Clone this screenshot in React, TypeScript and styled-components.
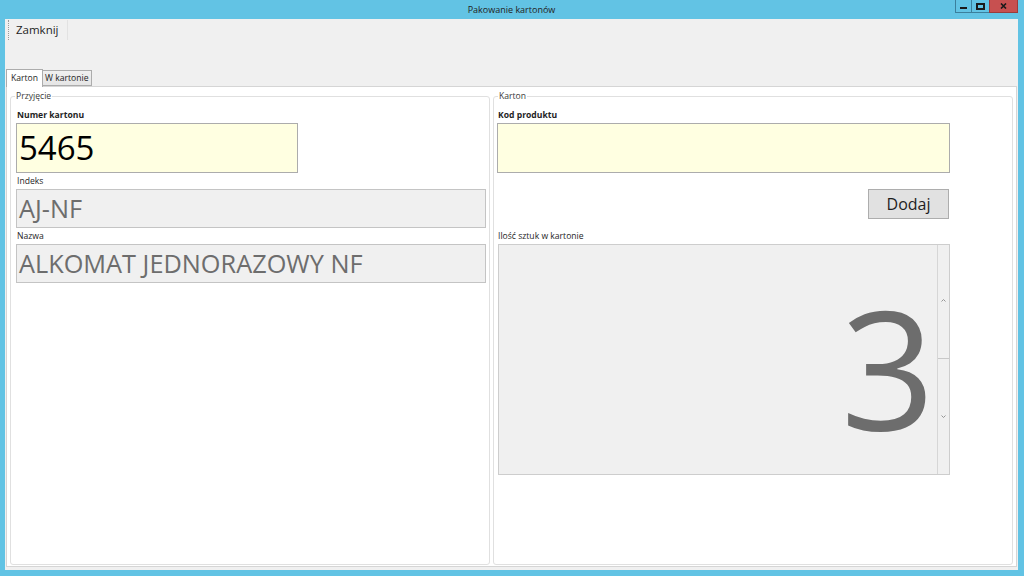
import styled, { createGlobalStyle } from "styled-components";

const Global = createGlobalStyle`
  html, body {
    margin: 0;
    padding: 0;
  }
  body {
    font-family: "Open Sans", "Noto Sans", sans-serif;
    color: #1e1e1e;
  }
`;

const Frame = styled.div`
  width: 1024px;
  height: 576px;
  box-sizing: border-box;
  background: #62c3e4;
  padding: 0 6px 6px 5px;
  display: flex;
  flex-direction: column;
`;

const TitleBar = styled.div`
  height: 19px;
  display: grid;
  grid-template-columns: 1fr auto 1fr;
  align-items: start;
`;

const Title = styled.div`
  grid-column: 2;
  font-size: 9px;
  line-height: 19px;
  color: #222;
`;

const WinButtons = styled.div`
  grid-column: 3;
  justify-self: end;
  display: flex;
`;

const WinButton = styled.div<{ $close?: boolean; $w: number }>`
  width: ${(p) => p.$w}px;
  height: 13px;
  box-sizing: border-box;
  border: 1px solid ${(p) => (p.$close ? "#9a3c3c" : "#3b7f9c")};
  border-top: none;
  margin-left: -1px;
  background: ${(p) => (p.$close ? "#c75050" : "transparent")};
  display: flex;
  align-items: center;
  justify-content: center;
`;

const MinGlyph = styled.div`
  width: 7px;
  height: 2px;
  margin-top: 4px;
  background: #1a1a1a;
`;

const MaxGlyph = styled.div`
  width: 5px;
  height: 3px;
  border: 2px solid #1a1a1a;
`;

const Client = styled.div`
  flex: 1;
  background: #f0f0f0;
  display: flex;
  flex-direction: column;
`;

const Toolbar = styled.div`
  height: 50px;
  padding: 1px 0 0 3px;
  box-sizing: border-box;
  display: flex;
  align-items: flex-start;
`;

const ToolButton = styled.button`
  font-family: inherit;
  font-size: 11.5px;
  color: #1e1e1e;
  background: transparent;
  border: none;
  border-left: 1px dotted #9a9a9a;
  border-right: 1px solid #e2e2e2;
  height: 20px;
  padding: 0 8px 0 7px;
  line-height: 20px;
`;

const TabStrip = styled.div`
  height: 17px;
  padding-left: 1px;
  display: flex;
  align-items: flex-end;
  position: relative;
  z-index: 1;
`;

const Tab = styled.div<{ $active?: boolean }>`
  font-size: 8.6px;
  box-sizing: border-box;
  height: ${(p) => (p.$active ? 18 : 16)}px;
  line-height: ${(p) => (p.$active ? 16 : 15)}px;
  margin-bottom: ${(p) => (p.$active ? -1 : 0)}px;
  padding: 0 ${(p) => (p.$active ? 4 : 2)}px;
  border: 1px solid #acacac;
  border-bottom: ${(p) => (p.$active ? "none" : "1px solid #acacac")};
  background: ${(p) => (p.$active ? "#ffffff" : "linear-gradient(#f0f0f0, #e5e5e5)")};
  margin-left: ${(p) => (p.$active ? 0 : -1)}px;
  color: #1e1e1e;
`;

const Panel = styled.div`
  flex: 1;
  background: #ffffff;
  border: 1px solid #d5d5d5;
  margin: 0 1px 3px 1px;
  padding: 3px 3px 1px 3px;
  display: grid;
  grid-template-columns: 480px 1fr;
  gap: 3px;
`;

const Group = styled.fieldset<{ $padLeft: number }>`
  margin: 0;
  min-width: 0;
  padding: 0 3px 0 ${(p) => p.$padLeft}px;
  border: 1px solid #e0e0e0;
  border-radius: 3px;
  display: flex;
  flex-direction: column;
  align-items: flex-start;
`;

const Legend = styled.legend<{ $shift: number }>`
  font-size: 8.6px;
  line-height: 12px;
  color: #3a3a3a;
  padding: 0 1px;
  margin-left: ${(p) => p.$shift}px;
`;

const Label = styled.div<{ $bold?: boolean; $top: number }>`
  font-size: 8.6px;
  font-weight: ${(p) => (p.$bold ? 700 : 400)};
  line-height: 13px;
  height: 13px;
  margin: ${(p) => p.$top}px 0 1px 1px;
  color: #1e1e1e;
`;

const TextBox = styled.div<{ $w: number; $h: number; $size: number; $editable?: boolean }>`
  box-sizing: border-box;
  width: ${(p) => p.$w}px;
  height: ${(p) => p.$h}px;
  border: 1px solid ${(p) => (p.$editable ? "#acacac" : "#c4c4c4")};
  background: ${(p) => (p.$editable ? "#ffffe1" : "#f0f0f0")};
  color: ${(p) => (p.$editable ? "#000000" : "#6d6d6d")};
  font-size: ${(p) => p.$size}px;
  line-height: ${(p) => p.$h - 2}px;
  padding-left: 2px;
  white-space: nowrap;
  overflow: hidden;
`;

const ButtonRow = styled.div`
  width: 453px;
  display: flex;
  justify-content: flex-end;
  margin-top: 16px;
`;

const PushButton = styled.button`
  width: 81px;
  height: 30px;
  margin-right: 1px;
  font-family: inherit;
  font-size: 16px;
  color: #1e1e1e;
  background: #e1e1e1;
  border: 1px solid #adadad;
  padding: 0;
`;

const Numeric = styled.div`
  width: 452px;
  height: 231px;
  margin-left: 1px;
  box-sizing: border-box;
  border: 1px solid #cdcdcd;
  background: #f0f0f0;
  display: flex;
`;

const NumericValue = styled.div`
  flex: 1;
  text-align: right;
  font-size: 165px;
  line-height: 200px;
  color: #6d6d6d;
  padding-right: 2px;
  padding-top: 21px;
`;

const Spinner = styled.div`
  width: 11px;
  border-left: 1px solid #d6d6d6;
  display: flex;
  flex-direction: column;
`;

const SpinHalf = styled.div<{ $bottom?: boolean }>`
  flex: 1;
  display: flex;
  justify-content: center;
  align-items: ${(p) => (p.$bottom ? "flex-end" : "flex-start")};
  padding: ${(p) => (p.$bottom ? "0 0 56px" : "54px 0 0")};
  border-top: ${(p) => (p.$bottom ? "1px solid #c8c8c8" : "none")};
`;

function Chevron({ up }: { up?: boolean }) {
  return (
    <svg width="5" height="3" viewBox="0 0 5 3">
      <path
        d={up ? "M0.5 2.5 L2.5 0.5 L4.5 2.5" : "M0.5 0.5 L2.5 2.5 L4.5 0.5"}
        fill="none"
        stroke="#8a8a8a"
        strokeWidth="0.9"
      />
    </svg>
  );
}

export default function App() {
  return (
    <>
      <Global />
      <Frame>
        <TitleBar>
          <Title>Pakowanie kartonów</Title>
          <WinButtons>
            <WinButton $w={17}>
              <MinGlyph />
            </WinButton>
            <WinButton $w={19}>
              <MaxGlyph />
            </WinButton>
            <WinButton $w={29} $close>
              <svg width="7" height="6" viewBox="0 0 7 6">
                <path d="M1 0.5 L6 5.5 M6 0.5 L1 5.5" stroke="#1a1a1a" strokeWidth="1.6" />
              </svg>
            </WinButton>
          </WinButtons>
        </TitleBar>
        <Client>
          <Toolbar>
            <ToolButton>Zamknij</ToolButton>
          </Toolbar>
          <TabStrip>
            <Tab $active>Karton</Tab>
            <Tab>W kartonie</Tab>
          </TabStrip>
          <Panel>
            <Group $padLeft={5}>
              <Legend $shift={-1}>Przyjęcie</Legend>
              <Label $bold $top={7}>Numer kartonu</Label>
              <TextBox $w={282} $h={50} $size={33} $editable>
                5465
              </TextBox>
              <Label $top={2}>Indeks</Label>
              <TextBox $w={470} $h={39} $size={25.3}>
                AJ-NF
              </TextBox>
              <Label $top={2}>Nazwa</Label>
              <TextBox $w={470} $h={39} $size={25.3}>
                ALKOMAT JEDNORAZOWY NF
              </TextBox>
            </Group>
            <Group $padLeft={3}>
              <Legend $shift={1}>Karton</Legend>
              <Label $bold $top={7}>Kod produktu</Label>
              <TextBox $w={453} $h={50} $size={33} $editable />
              <ButtonRow>
                <PushButton>Dodaj</PushButton>
              </ButtonRow>
              <Label $top={11}>Ilość sztuk w kartonie</Label>
              <Numeric>
                <NumericValue>3</NumericValue>
                <Spinner>
                  <SpinHalf>
                    <Chevron up />
                  </SpinHalf>
                  <SpinHalf $bottom>
                    <Chevron />
                  </SpinHalf>
                </Spinner>
              </Numeric>
            </Group>
          </Panel>
        </Client>
      </Frame>
    </>
  );
}
